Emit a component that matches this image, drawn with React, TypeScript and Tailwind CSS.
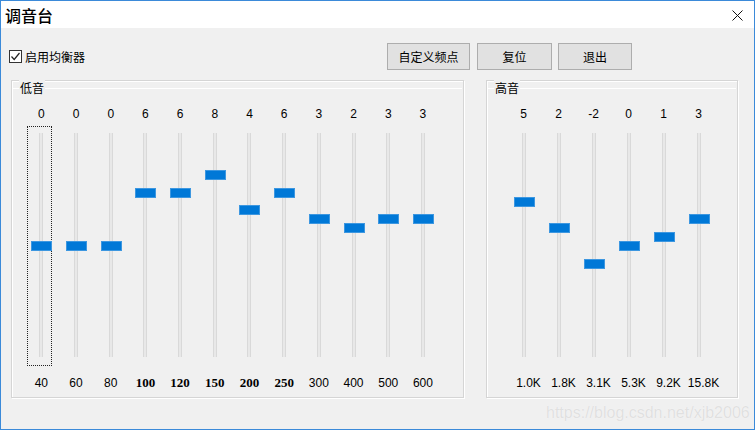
/**
 * App.tsx — 调音台 (equalizer) dialog, Win10 classic look.
 */

const LOW_BANDS = [
  { freq: "40", value: 0 },
  { freq: "60", value: 0 },
  { freq: "80", value: 0 },
  { freq: "100", value: 6, serif: true },
  { freq: "120", value: 6, serif: true },
  { freq: "150", value: 8, serif: true },
  { freq: "200", value: 4, serif: true },
  { freq: "250", value: 6, serif: true },
  { freq: "300", value: 3 },
  { freq: "400", value: 2 },
  { freq: "500", value: 3 },
  { freq: "600", value: 3 },
];

const HIGH_BANDS = [
  { freq: "1.0K", value: 5 },
  { freq: "1.8K", value: 2 },
  { freq: "3.1K", value: -2 },
  { freq: "5.3K", value: 0 },
  { freq: "9.2K", value: 1 },
  { freq: "15.8K", value: 3 },
];

// 0 dB sits 113px below the track top; one step ≈ 8.9px.
const thumbTop = (value: number) => 113 - value * 8.9 - 5;

function Track({ value, focused }: { value: number; focused?: boolean }) {
  return (
    <div className="relative mt-[11px] h-[224px] w-[4px] border-x border-[#d9d9d9] bg-[#e8e8e8]">
      {focused && (
        <div className="absolute left-[-13px] top-[-7px] h-[240px] w-[25px] border border-dotted border-[#222]" />
      )}
      <div
        className="absolute left-[-9px] h-[10px] w-[21px] border border-[#3d97e0] bg-[#0078d7]"
        style={{ top: thumbTop(value) }}
      />
    </div>
  );
}

function GroupBox({
  title,
  className,
  children,
}: {
  title: string;
  className: string;
  children: React.ReactNode;
}) {
  return (
    <div
      className={`relative h-[318px] border border-[#d5d5d5] shadow-[inset_1px_1px_0_#fff,1px_1px_0_#fff] ${className}`}
    >
      <div className="mx-[1px] mt-[7px] h-[1px] bg-white" />
      <span className="absolute left-[7px] top-[-2px] h-[20px] bg-[#f0f0f0] px-[1px] text-[12px] leading-[20px] text-black">
        {title}
      </span>
      {children}
    </div>
  );
}

export default function App() {
  return (
    <div className="relative flex h-[430px] w-[755px] flex-col overflow-hidden border border-[#3b8ad9] bg-[#f0f0f0] font-['Liberation_Sans','Noto_Sans_CJK_SC',sans-serif] text-black">
      {/* title bar */}
      <div className="flex h-[27px] items-center justify-between bg-white pl-[4px] pr-[11px]">
        <span className="text-[16px] font-medium leading-none font-['Noto_Sans_CJK_SC',sans-serif]">调音台</span>
        <svg width="11" height="11" viewBox="0 0 11 11" className="mt-[1px]">
          <path d="M0.5 0.5 L10.5 10.5 M10.5 0.5 L0.5 10.5" stroke="#111" strokeWidth="1" />
        </svg>
      </div>

      {/* toolbar row */}
      <div className="mt-[15px] flex h-[27px] items-center pl-[8px] text-[12px]">
        <label className="flex w-[378px] items-center">
          <span className="flex h-[13px] w-[13px] items-center justify-center border border-[#333] bg-white">
            <svg width="11" height="11" viewBox="0 0 11 11">
              <path d="M1.5 5.5 L4.2 8.5 L9.5 2" fill="none" stroke="#222" strokeWidth="1.2" />
            </svg>
          </span>
          <span className="ml-[3px] font-['Noto_Sans_CJK_SC',sans-serif]">启用均衡器</span>
        </label>
        <button className="h-[27px] w-[83px] border border-[#adadad] bg-[#e1e1e1] font-['Noto_Sans_CJK_SC',sans-serif]">
          自定义频点
        </button>
        <button className="ml-[7px] h-[27px] w-[75px] border border-[#adadad] bg-[#e1e1e1] font-['Noto_Sans_CJK_SC',sans-serif]">
          复位
        </button>
        <button className="ml-[6px] h-[27px] w-[74px] border border-[#adadad] bg-[#e1e1e1] font-['Noto_Sans_CJK_SC',sans-serif]">
          退出
        </button>
      </div>

      {/* equalizer groups */}
      <div className="mt-[10px] flex pl-[10px]">
        <GroupBox title="低音" className="w-[453px]">
          <div className="flex pl-[12px] pt-[17px]">
            {LOW_BANDS.map((band, i) => (
              <div key={band.freq} className="flex w-[34.7px] flex-col items-center">
                <span className="h-[16px] text-[12px] leading-[16px]">{band.value}</span>
                <Track value={band.value} focused={i === 0} />
                <span
                  className={
                    band.serif
                      ? "mt-[18px] h-[16px] font-['Liberation_Serif',serif] text-[13px] font-bold leading-[16px]"
                      : "mt-[18px] h-[16px] text-[12px] leading-[16px]"
                  }
                >
                  {band.freq}
                </span>
              </div>
            ))}
          </div>
        </GroupBox>

        <GroupBox title="高音" className="ml-[22px] w-[252px]">
          <div className="flex pl-[19px] pt-[17px]">
            {HIGH_BANDS.map((band) => (
              <div key={band.freq} className="flex w-[35px] flex-col items-center">
                <span className="h-[16px] text-[12px] leading-[16px]">{band.value}</span>
                <Track value={band.value} />
                <span className="mt-[18px] h-[16px] translate-x-[5px] whitespace-nowrap text-[12px] leading-[16px]">
                  {band.freq}
                </span>
              </div>
            ))}
          </div>
        </GroupBox>
      </div>

      {/* watermark */}
      <span className="absolute left-[545px] top-[400px] text-[16px] text-[#e0e0e0] [text-shadow:0_0_1px_#fff]">
        https://blog.csdn.net/xjb2006
      </span>
    </div>
  );
}
